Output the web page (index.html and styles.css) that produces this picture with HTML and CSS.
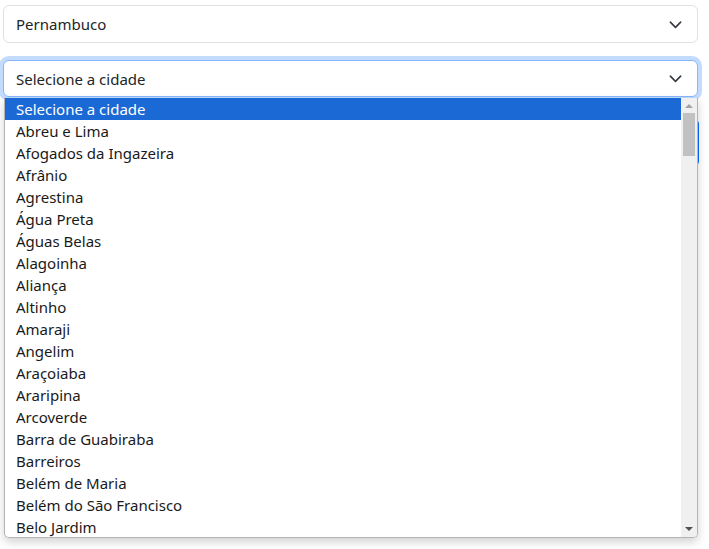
FILE: index.html
```html
<!DOCTYPE html>
<html lang="pt-BR">
<head>
<meta charset="utf-8">
<title>Cidades</title>
<link rel="stylesheet" href="styles.css">
</head>
<body>
<div class="page">
  <div class="select">
    <span>Pernambuco</span>
    <svg class="chev" viewBox="0 0 16 16" width="16" height="16"><path d="M2.5 5.5l5.5 5.5 5.5-5.5" fill="none" stroke="#343a40" stroke-width="1.7" stroke-linecap="round" stroke-linejoin="round"/></svg>
  </div>
  <div class="select focus">
    <span>Selecione a cidade</span>
    <svg class="chev" viewBox="0 0 16 16" width="16" height="16"><path d="M2.5 5.5l5.5 5.5 5.5-5.5" fill="none" stroke="#343a40" stroke-width="1.7" stroke-linecap="round" stroke-linejoin="round"/></svg>
  </div>
  <div class="behind"></div>
</div>
<div class="listbox">
  <ul class="options">
    <li class="sel">Selecione a cidade</li>
    <li>Abreu e Lima</li>
    <li>Afogados da Ingazeira</li>
    <li>Afrânio</li>
    <li>Agrestina</li>
    <li>Água Preta</li>
    <li>Águas Belas</li>
    <li>Alagoinha</li>
    <li>Aliança</li>
    <li>Altinho</li>
    <li>Amaraji</li>
    <li>Angelim</li>
    <li>Araçoiaba</li>
    <li>Araripina</li>
    <li>Arcoverde</li>
    <li>Barra de Guabiraba</li>
    <li>Barreiros</li>
    <li>Belém de Maria</li>
    <li>Belém do São Francisco</li>
    <li>Belo Jardim</li>
  </ul>
  <div class="scrollbar">
    <div class="arrow up"></div>
    <div class="track"><div class="thumb"></div></div>
    <div class="arrow down"></div>
  </div>
</div>
</body>
</html>
```
FILE: styles.css
```css
* { box-sizing: border-box; }
html, body { margin: 0; background: #fff; }
body {
  font-family: "Noto Sans", "Open Sans", sans-serif;
  font-size: 15px;
  color: #212529;
  width: 709px;
  height: 549px;
  overflow: hidden;
  position: relative;
}
.page {
  padding: 5px 11px 0 3px;
  display: flex;
  flex-direction: column;
  gap: 17px;
}
.select {
  height: 38px;
  border: 1px solid #dee2e6;
  border-radius: 6px;
  padding: 0 12px 0 12px;
  display: flex;
  align-items: center;
  justify-content: space-between;
  background: #fff;
}
.select.focus {
  height: 37px;
  border-color: #86b7fe;
  box-shadow: 0 0 0 4px rgba(13,110,253,.25);
}
.chev { width: 15px; height: 15px; margin-right: 2px; }
.behind {
  margin-top: 6px;
  align-self: flex-end;
  width: 40px;
  height: 45px;
  background: #0d6efd;
  border-radius: 0 4px 4px 0;
  margin-right: -1px;
}
.listbox {
  position: absolute;
  left: 4px;
  top: 98px;
  width: 694px;
  height: 440px;
  background: #fff;
  border: 1px solid #b4b4b4;
  border-top: none;
  border-radius: 0 0 5px 5px;
  box-shadow: 0 4px 10px rgba(0,0,0,.18);
  display: flex;
  overflow: hidden;
}
.options {
  list-style: none;
  margin: 0;
  padding: 0;
  flex: 1;
}
.options li {
  height: 22px;
  line-height: 22px;
  padding-left: 11px;
  white-space: nowrap;
  color: #1a1a1a;
}
.options li.sel { background: #1a69d4; color: #fff; }
.scrollbar {
  width: 16px;
  background: #f0f0f0;
  display: flex;
  flex-direction: column;
  align-items: center;
}
.arrow { width: 0; height: 0; border-left: 4px solid transparent; border-right: 4px solid transparent; }
.arrow.up { border-bottom: 4px solid #a3a3a3; margin: 6px 0 5px; }
.arrow.down { border-top: 4px solid #505050; margin: 5px 0 6px; }
.track { flex: 1; width: 100%; padding: 0 2px; }
.thumb { height: 43px; background: #c1c1c1; }
```
